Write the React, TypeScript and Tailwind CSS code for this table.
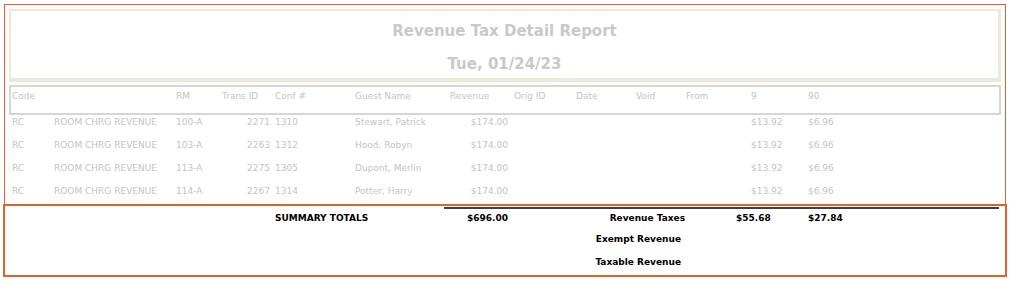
import React from "react";

const rows = [
  { rm: "100-A", trans: "2271", conf: "1310", guest: "Stewart, Patrick" },
  { rm: "103-A", trans: "2263", conf: "1312", guest: "Hood, Robyn" },
  { rm: "113-A", trans: "2275", conf: "1305", guest: "Dupont, Merlin" },
  { rm: "114-A", trans: "2267", conf: "1314", guest: "Potter, Harry" },
];

function Cols({
  code,
  desc,
  rm,
  trans,
  conf,
  guest,
  revenue,
  orig,
  date,
  voidv,
  from,
  t9,
  t90,
  numRight,
}: {
  code: string;
  desc: string;
  rm: string;
  trans: string;
  conf: string;
  guest: string;
  revenue: string;
  orig: string;
  date: string;
  voidv: string;
  from: string;
  t9: string;
  t90: string;
  numRight: boolean;
}) {
  return (
    <div className="flex leading-[13px] whitespace-nowrap">
      <div className="w-[42px] shrink-0">{code}</div>
      <div className="w-[122px] shrink-0">{desc}</div>
      <div className="w-[46px] shrink-0">{rm}</div>
      <div className={`w-[48px] shrink-0 ${numRight ? "text-right" : "text-left"}`}>{trans}</div>
      <div className="w-[85px] shrink-0 pl-[5px]">{conf}</div>
      <div className="w-[95px] shrink-0">{guest}</div>
      <div className={`w-[58px] shrink-0 ${numRight ? "text-right" : "text-left"}`}>{revenue}</div>
      <div className="w-[68px] shrink-0 pl-[6px]">{orig}</div>
      <div className="w-[60px] shrink-0">{date}</div>
      <div className="w-[50px] shrink-0">{voidv}</div>
      <div className="w-[65px] shrink-0">{from}</div>
      <div className="w-[57px] shrink-0">{t9}</div>
      <div className="w-[60px] shrink-0">{t90}</div>
    </div>
  );
}

export default function App() {
  return (
    <div className="w-[1011px] h-[281px] bg-white overflow-hidden font-['DejaVu_Sans',sans-serif] text-[9px]">
      <div className="ml-[4px] mt-[4px] w-[1002px] border border-b-0 border-[#e2622a] pt-[4px] px-[4px] pb-[6px]">
        <div className="h-[73px] border-t-2 border-l-2 border-r-[3px] border-b-4 border-[#eaeadb] flex flex-col items-center pt-[10px] font-bold text-[15px] text-[#c9c9c9]">
          <div className="leading-[20px]">Revenue Tax Detail Report</div>
          <div className="leading-[20px] mt-[13px]">Tue, 01/24/23</div>
        </div>
        <div className="mt-[3px] h-[30px] border-2 border-[#d6d6d6] pt-[3px] pl-[1px] text-[#c4c4c4]">
          <Cols
            code="Code"
            desc=""
            rm="RM"
            trans="Trans ID"
            conf="Conf #"
            guest="Guest Name"
            revenue="Revenue"
            orig="Orig ID"
            date="Date"
            voidv="Void"
            from="From"
            t9="9"
            t90="90"
            numRight={false}
          />
        </div>
        <div className="mt-[1px] pl-[3px] flex flex-col gap-[10px] text-[#c4c4c4]">
          {rows.map((r) => (
            <Cols
              key={r.trans}
              code="RC"
              desc="ROOM CHRG REVENUE"
              rm={r.rm}
              trans={r.trans}
              conf={r.conf}
              guest={r.guest}
              revenue="$174.00"
              orig=""
              date=""
              voidv=""
              from=""
              t9="$13.92"
              t90="$6.96"
              numRight={true}
            />
          ))}
        </div>
      </div>
      <div className="ml-[3px] w-[1004px] h-[73px] border-2 border-[#e2622a] text-black font-bold">
        <div className="ml-[439px] mt-[1px] w-[555px] h-[2px] bg-[#3f3f3f]" />
        <div className="mt-[3px] flex leading-[13px] whitespace-nowrap">
          <div className="w-[270px] shrink-0" />
          <div className="w-[172px] shrink-0">SUMMARY TOTALS</div>
          <div className="w-[61px] shrink-0 text-right">$696.00</div>
          <div className="w-[177px] shrink-0 text-right">Revenue Taxes</div>
          <div className="w-[51px] shrink-0" />
          <div className="w-[72px] shrink-0">$55.68</div>
          <div className="w-[60px] shrink-0">$27.84</div>
        </div>
        <div className="mt-[8px] flex leading-[13px] whitespace-nowrap">
          <div className="w-[676px] shrink-0 text-right">Exempt Revenue</div>
        </div>
        <div className="mt-[10px] flex leading-[13px] whitespace-nowrap">
          <div className="w-[676px] shrink-0 text-right">Taxable Revenue</div>
        </div>
      </div>
    </div>
  );
}
